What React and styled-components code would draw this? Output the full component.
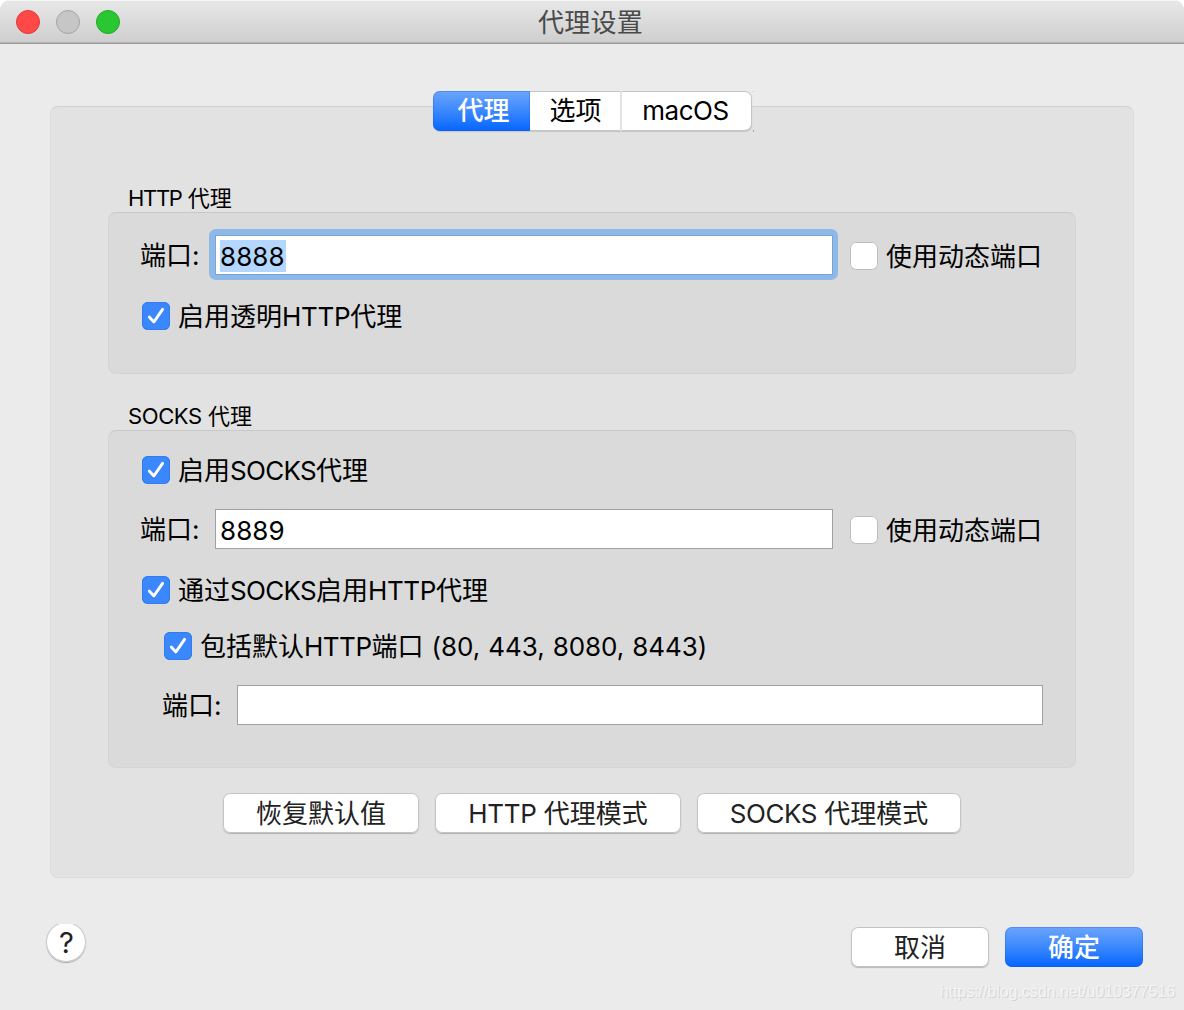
import React from "react";
import styled, { createGlobalStyle, css } from "styled-components";


const Check = () => (
  <svg width="28" height="28" viewBox="0 0 28 28" fill="none">
    <path d="M7.4 16 L11.9 21 L20.5 8" stroke="#1c62cf" strokeOpacity="0.4" strokeWidth="3" strokeLinecap="round" strokeLinejoin="round" />
    <path d="M7.4 15.2 L11.9 20 L20.6 7.4" stroke="#fff" strokeWidth="3" strokeLinecap="round" strokeLinejoin="round" />
  </svg>
);

const CheckField = ({ checked, children }) => (
  <Option>
    <Box $checked={checked}>{checked && <Check />}</Box>
    <OptionText>{children}</OptionText>
  </Option>
);

const App = () => {
  return (
    <>
      <GlobalStyle />
      <Window>
        <TitleBar>
          <Lights>
            <Light $color="#fe4947" $edge="#e0393a" />
            <Light $color="#c6c6c6" $edge="#a3a3a3" />
            <Light $color="#2bc732" $edge="#1fa827" />
          </Lights>
          <Title>代理设置</Title>
        </TitleBar>

        <Panel>
          <Tabs>
            <Tab $width={97} $active>代理</Tab>
            <Tab $width={92}>选项</Tab>
            <Tab $width={130}><Latin>macOS</Latin></Tab>
          </Tabs>

          <GroupTitle $top={54}><Latin $spacing="-1.3px">HTTP</Latin> 代理</GroupTitle>
          <Group $height={162}>
            <Row $top={22}>
              <Label>端口:</Label>
              <FocusRing>
                <Input $width={618} $focus><Selected>8888</Selected></Input>
              </FocusRing>
              <CheckField>使用动态端口</CheckField>
            </Row>
            <Row $top={21} $indent={2}>
              <CheckField checked>启用透明<Latin $spacing="-0.3px">HTTP</Latin>代理</CheckField>
            </Row>
          </Group>

          <GroupTitle $top={29}><Latin $spacing="-0.4px">SOCKS</Latin> 代理</GroupTitle>
          <Group $height={338}>
            <Row $top={19} $indent={2}>
              <CheckField checked>启用<Latin $spacing="-0.7px">SOCKS</Latin>代理</CheckField>
            </Row>
            <Row $top={19}>
              <Label>端口:</Label>
              <Input $width={618}>8889</Input>
              <CheckField>使用动态端口</CheckField>
            </Row>
            <Row $top={21} $indent={2}>
              <CheckField checked>通过<Latin $spacing="-0.7px">SOCKS</Latin>启用<Latin $spacing="-0.4px">HTTP</Latin>代理</CheckField>
            </Row>
            <Row $top={16} $indent={24}>
              <CheckField checked>包括默认<Latin>HTTP</Latin>端口<Ports> (80, 443, 8080, 8443)</Ports></CheckField>
            </Row>
            <Row $top={19} $indent={22}>
              <Label>端口:</Label>
              <Input $width={806} $last />
            </Row>
          </Group>

          <Actions>
            <Button $width={196}>恢复默认值</Button>
            <Button $width={246}><Latin $spacing="-0.3px">HTTP</Latin>&nbsp;代理模式</Button>
            <Button $width={264}><Latin>SOCKS</Latin>&nbsp;代理模式</Button>
          </Actions>
        </Panel>

        <Footer>
          <Help>?</Help>
          <FooterButtons>
            <Button $width={138}>取消</Button>
            <Button $width={138} $primary>确定</Button>
          </FooterButtons>
        </Footer>
        <Watermark>https://blog.csdn.net/u010377516</Watermark>
      </Window>
    </>
  );
};
export default App;


const GlobalStyle = createGlobalStyle`
  * {
    box-sizing: border-box;
  }
  body {
    margin: 0;
    background: #fff;
    font-family: Inter, "Noto Sans CJK SC", sans-serif;
    font-size: 26px;
    color: #000;
  }
`;

const blue = css`
  color: #fff;
  background: linear-gradient(#6ba5fc, #3b88fd 50%, #0565ff);
  box-shadow: inset 0 0 0 1px rgba(20, 90, 220, 0.3);
`;

const Window = styled.div`
  width: 1184px;
  height: 1010px;
  display: flex;
  flex-direction: column;
  background: #ebebeb;
  border-radius: 10px 10px 0 0;
  overflow: hidden;
  position: relative;
`;

const TitleBar = styled.header`
  height: 44px;
  flex: none;
  display: grid;
  grid-template-columns: 1fr auto 1fr;
  align-items: center;
  padding: 0 16px;
  background: linear-gradient(#e8e8e8, #cecece);
  border-bottom: 1px solid #9c9c9c;
  box-shadow: inset 0 1px 0 #f5f5f5, inset 0 -1px 0 #b4b4b4;
`;

const Lights = styled.div`
  display: flex;
  gap: 16px;
`;

const Light = styled.span`
  width: 24px;
  height: 24px;
  border-radius: 50%;
  background: ${(p) => p.$color};
  border: 1px solid ${(p) => p.$edge};
`;

const Title = styled.div`
  color: #4a4a4a;
  line-height: 40px;
  padding: 3px 3px 0 0;
  letter-spacing: 0.2px;
`;

const Panel = styled.main`
  width: 1084px;
  height: 772px;
  margin: 62px 0 0 50px;
  padding: 0 57px;
  display: flex;
  flex-direction: column;
  background: #e2e2e2;
  border: 1px solid #dbdbdb;
  border-top-color: #d0d0d0;
  border-radius: 8px;
`;

/* sits across the top edge of the panel */
const Tabs = styled.div`
  align-self: center;
  display: flex;
  height: 40px;
  margin-top: -16px;
  background: #fff;
  border-radius: 7px;
  box-shadow: inset 0 0 0 1px #c4c4c4, inset 0 -1px 0 #a8a8a8, 0 1px 1px rgba(0, 0, 0, 0.12);
  position: relative;

  /* faint end marks right of the last tab */
  &::after {
    content: "";
    position: absolute;
    left: 320px;
    top: 0;
    width: 1px;
    height: 41px;
    background: linear-gradient(#c0c0c0 1px, transparent 1px 39px, #a8a8a8 39px);
  }
`;

const Tab = styled.div`
  width: ${(p) => p.$width}px;
  height: 40px;
  line-height: 40px;
  text-align: center;
  padding-left: 2px;
  border-right: 2px solid #e2e2e2;
  ${(p) => p.$active && blue}
  ${(p) => p.$active && "border-right: 0; padding-left: 5px; border-radius: 7px 0 0 7px; font-weight: 500;"}
  &:last-child {
    border-right: 0;
    padding-left: 0;
    padding-right: 2px;
  }
`;

const Latin = styled.span`
  letter-spacing: ${(p) => p.$spacing || "-0.5px"};
  white-space: pre;
`;

const Ports = styled.span`
  letter-spacing: -0.05px;
  word-spacing: 0.8px;
  white-space: pre;
`;

const GroupTitle = styled.h2`
  margin: ${(p) => p.$top}px 0 0 20px;
  height: 27px;
  line-height: 27px;
  font-size: 22px;
  font-weight: 400;
`;

const Group = styled.section`
  height: ${(p) => p.$height}px;
  padding: 0 31px;
  background: #dadada;
  border: 1px solid #d4d4d4;
  border-top-color: #c8c8c8;
  border-radius: 8px;
`;

const Row = styled.div`
  display: flex;
  align-items: center;
  height: 40px;
  margin: ${(p) => p.$top}px 0 0 ${(p) => p.$indent || 0}px;
`;

const Label = styled.span`
  flex: none;
  width: 75px;
  padding-top: 2px;
  line-height: 40px;
`;

const Option = styled.label`
  display: flex;
  align-items: center;
  gap: 8px;
`;

const Input = styled.div`
  flex: none;
  width: ${(p) => p.$width}px;
  height: 40px;
  margin-right: ${(p) => (p.$last || p.$focus ? 0 : 17)}px;
  padding: 4px 4px 0;
  line-height: 34px;
  background: #fff;
  border: 1px solid ${(p) => (p.$focus ? "#7ba3cf" : "#a0a0a0")};
  letter-spacing: 0.1px;

  & + ${Option} {
    margin-top: 2px;
  }
`;

const FocusRing = styled.div`
  flex: none;
  margin: -6px 12px -5px -6px;
  padding: 6px 5px 5px 6px;
  background: #8cb9e7;
  border-radius: 7px;

  & + ${Option} {
    margin-top: 2px;
  }
`;

const Selected = styled.span`
  display: inline-block;
  width: 66px;
  height: 32px;
  background: #b3d7ff;
`;

const Box = styled.span`
  width: 28px;
  height: 28px;
  display: flex;
  border-radius: 6px;
  background: ${(p) => (p.$checked ? "#3b87fe" : "#fff")};
  box-shadow: inset 0 0 0 1px ${(p) => (p.$checked ? "#347bec" : "#bdbdbd")};
`;

const OptionText = styled.span`
  padding-top: 2px;
  line-height: 40px;
  white-space: nowrap;
`;

const Actions = styled.div`
  display: flex;
  justify-content: center;
  gap: 16px;
  margin-top: 25px;
`;

const Button = styled.button`
  width: ${(p) => p.$width}px;
  height: 40px;
  padding: 0;
  border: 0;
  border-radius: 7px;
  font: inherit;
  line-height: 39px;
  color: #222;
  background: #fff;
  box-shadow: inset 0 0 0 1px #c4c4c4, 0 1px 1px rgba(0, 0, 0, 0.22);
  ${(p) => p.$primary && blue}
  ${(p) => p.$primary && "font-weight: 500;"}
`;

const Footer = styled.footer`
  display: flex;
  justify-content: space-between;
  align-items: flex-start;
  padding: 44px 41px 0 46px;
`;

/* the round button is cut flat at its top edge */
const Help = styled.div`
  width: 40px;
  height: 40px;
  padding-left: 1px;
  border-radius: 50%;
  background: #fff;
  box-shadow: inset 0 0 0 1px #c8c8c8, 0 1px 1px rgba(0, 0, 0, 0.28);
  clip-path: inset(2px -2px -4px -2px);
  text-align: center;
  line-height: 41px;
  font-size: 29px;
  color: #222;
`;

const FooterButtons = styled.div`
  display: flex;
  gap: 16px;
  padding-top: 5px;
`;

const Watermark = styled.div`
  position: absolute;
  right: 9px;
  bottom: 8px;
  font-family: "Liberation Sans", sans-serif;
  font-size: 16px;
  line-height: 20px;
  letter-spacing: -0.04px;
  color: #f4f4f4;
  text-shadow: 1px 1px 0 #d4d4d4;
`;
